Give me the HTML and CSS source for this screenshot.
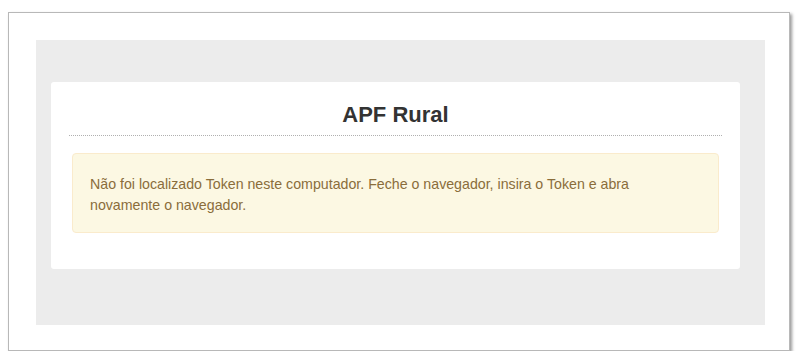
FILE: index.html
```html
<!DOCTYPE html>
<html lang="pt-BR">
<head>
<meta charset="utf-8">
<title>APF Rural</title>
<link rel="stylesheet" href="styles.css">
</head>
<body>
  <div class="frame">
    <div class="stage">
      <div class="card">
        <h1 class="title">APF Rural</h1>
        <div class="alert">Não foi localizado Token neste computador. Feche o navegador, insira o Token e abra novamente o navegador.</div>
      </div>
    </div>
  </div>
</body>
</html>
```
FILE: styles.css
```css
html, body {
  margin: 0;
  background: #ffffff;
}
body {
  padding: 12px 0 0 8px;
  font-family: "Liberation Sans", Arial, sans-serif;
}
.frame {
  box-sizing: border-box;
  width: 782px;
  height: 339px;
  border: 1px solid #b8b8b8;
  background: #ffffff;
  box-shadow: 2px 2px 3px rgba(0, 0, 0, 0.4);
  padding: 27px 0 0 27px;
}
.stage {
  box-sizing: border-box;
  width: 729px;
  height: 285px;
  background: #ececec;
  padding: 42px 0 0 15px;
}
.card {
  box-sizing: border-box;
  width: 689px;
  height: 187px;
  background: #ffffff;
  border-radius: 3px;
  padding: 0 18px;
}
.title {
  margin: 0;
  padding: 20px 0 7px;
  font-size: 22px;
  line-height: 26px;
  font-weight: bold;
  text-align: center;
  color: #333333;
  border-bottom: 1px dotted #b0b0b0;
}
.alert {
  box-sizing: border-box;
  margin: 17px 3px 0;
  height: 80px;
  padding: 20px 17px 0;
  background: #fcf8e3;
  border: 1px solid #faebcc;
  border-radius: 4px;
  color: #8a6d3b;
  font-size: 14.2px;
  line-height: 21px;
}
```
